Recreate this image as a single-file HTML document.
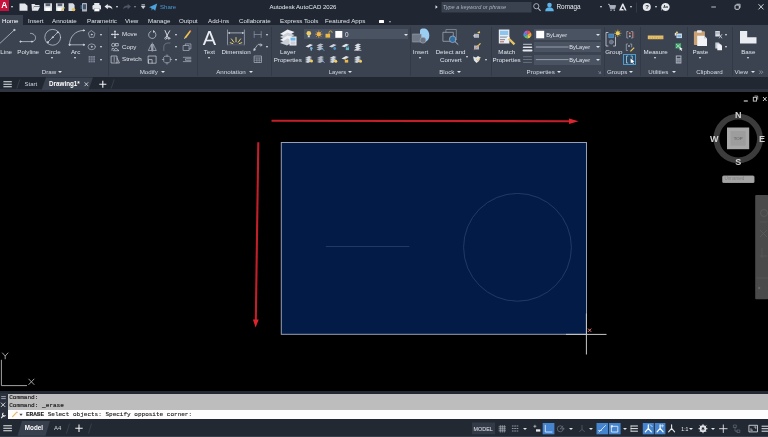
<!DOCTYPE html>
<html><head><meta charset="utf-8"><title>Autodesk AutoCAD 2026</title>
<style>
*{margin:0;padding:0;box-sizing:border-box}
html,body{width:768px;height:437px;overflow:hidden;background:#000}
body{position:relative;font-family:"Liberation Sans",sans-serif;color:#dfe3ea;font-size:6px}
.a{position:absolute}
.t{position:absolute;white-space:nowrap;line-height:8px;height:8px;font-size:6.2px;color:#dfe3ea;transform:translateX(-50%);text-align:center}
.l{position:absolute;white-space:nowrap;line-height:8px;height:8px;font-size:6.2px;color:#dfe3ea}
#title{left:0;top:0;width:768px;height:26px;background:#212732}
#ribbon{left:0;top:25.400px;width:768px;height:51.500px;background:#3b4351}
#hometab{left:0;top:15.400px;width:23px;height:11px;background:#3b4351}
#doctabs{left:0;top:77px;width:768px;height:12px;background:#222832}
#frame{left:0;top:89px;width:768px;height:3px;background:#2e3440}
#canvas{left:0;top:92px;width:768px;height:299px;background:#000}
.sep{position:absolute;top:27px;width:1px;height:49px;background:#333a47}
.dd{position:absolute;background:#4a5362;height:10px}
.arr{position:absolute;width:0;height:0;border-left:1.6px solid transparent;border-right:1.6px solid transparent;border-top:2px solid #dfe3ea}
.arr.b{border-left-width:2.2px;border-right-width:2.2px;border-top-width:2.6px;margin-left:-.3px}
.pt{position:absolute;white-space:nowrap;line-height:8px;height:8px;font-size:6.2px;color:#d5dae3;top:68px}
svg{position:absolute;overflow:visible}
#w{position:absolute;left:0;top:0;width:768px;height:437px;will-change:transform}
</style></head><body><div id="w">
<div class="a" id="title"></div>
<div class="a" id="hometab"></div>
<div class="a" id="ribbon"></div>
<div class="a" id="doctabs"></div>
<div class="a" id="frame"></div>
<div class="a" id="canvas"></div>
<!--TITLEBAR-->
<div class="a" style="left:0;top:0;width:9px;height:11px;background:#c8103c"></div>
<div class="l" style="left:1.2px;top:1.2px;font-size:8.5px;font-weight:bold;color:#fff;line-height:9px">A</div>
<div class="arr" style="left:10.6px;top:6px"></div>
<svg style="left:0;top:0" width="768" height="16" viewBox="0 0 768 16">
 <!-- new -->
 <path d="M19.5 3.5h5.5l2.5 2.2v5h-8z" fill="#e4e7ec"/>
 <!-- open -->
 <path d="M31.5 4h3l1 1h4v1.2h-5.5l-2 4.5z M32 10.7l2-4h6l-2 4z" fill="#e4e7ec"/>
 <!-- save -->
 <rect x="44" y="3.3" width="8" height="7.6" fill="#d8dce3"/><rect x="45.6" y="3.3" width="4.6" height="2.8" fill="#5a6270"/><rect x="45.4" y="7.6" width="5" height="3.3" fill="#fff"/>
 <!-- saveas -->
 <rect x="56" y="3.3" width="8" height="7.6" fill="#d8dce3"/><rect x="57.6" y="3.3" width="4.6" height="2.8" fill="#5a6270"/><rect x="57.4" y="7.6" width="4" height="3.3" fill="#fff"/><path d="M61 10.5l3-3.5 1 .8-3 3.4z" fill="#e6c35a"/>
 <!-- web -->
 <path d="M68.5 3.3h4.5l1.6 1.6v6h-6.1z" fill="#d8dce3"/><circle cx="73.6" cy="9.6" r="1.7" fill="#e6c35a"/>
 <!-- mobile -->
 <rect x="82" y="3" width="5" height="8.5" rx=".6" fill="#aeb5c1"/><rect x="83" y="4.3" width="3" height="5" fill="#4a5362"/><path d="M80.5 6h2.4M80.5 8h2.4" stroke="#4da3e0" stroke-width=".8"/>
 <!-- print -->
 <rect x="92.5" y="5" width="8.5" height="4.6" rx="1.2" fill="#e4e7ec"/><rect x="94.2" y="3" width="5.2" height="2.6" fill="#e4e7ec"/><rect x="94.2" y="8.2" width="5.2" height="3" fill="#fff" stroke="#8b93a0" stroke-width=".4"/>
 <!-- undo -->
 <path d="M104.5 6.6l3.3-2.6v1.6c3 0 4.6 1.6 4.6 4-.9-1.5-2.2-2-4.6-2v1.7z" fill="#e4e7ec"/>
 <!-- redo dim -->
 <path d="M131 6.6l-3.3-2.6v1.6c-3 0-4.6 1.6-4.6 4 .9-1.5 2.2-2 4.6-2v1.7z" fill="#4f5765"/>
 <!-- qat dropdown -->
 <path d="M141.5 4.6h3.4M141.3 6l1.9 2.6 1.9-2.6z" stroke="#cfd4dc" stroke-width=".7" fill="#cfd4dc"/>
 <!-- share -->
 <path d="M149 7.2l8.2-3.8-2 7.4-2.3-2-1.2 1.6-.3-2.5z" fill="#4aa3df"/>
 <!-- search tri -->
 <path d="M435.5 5.3l2.2 1.7-2.2 1.7z" fill="#e4e7ec"/>
 <rect x="441.500" y="2" width="90" height="10.500" fill="#3a4250"/>
 <!-- search icon -->
 <circle cx="536.3" cy="6.2" r="2.6" fill="none" stroke="#b4bbc7" stroke-width=".9"/><path d="M538.2 8.3l2.4 2.6" stroke="#b4bbc7" stroke-width="1.1"/>
 <!-- user -->
 <circle cx="549.5" cy="5" r="2.3" fill="#5db4ea"/><path d="M545.2 11.3c0-3 2-4 4.300-4s4.300 1 4.300 4z" fill="#5db4ea"/>
 <!-- cart -->
 <path d="M608 4.300h1.300l1.200 4.500h4.200l.9-3.300h-6" fill="#aab1bd" stroke="#aab1bd" stroke-width=".9"/><circle cx="611" cy="10.300" r=".8" fill="#aab1bd"/><circle cx="614.300" cy="10.300" r=".8" fill="#aab1bd"/>
 <!-- autodesk A -->
 <path d="M619 10.600l3.300-7h1l3.300 7h-1.700l-2.100-4.600-1.300 3.100h1.700l.6 1.500z" fill="#e4e7ec"/>
 <path d="M636.500 2.500v10" stroke="#3a4250" stroke-width=".7"/>
 <!-- help -->
 <circle cx="646.800" cy="7" r="4" fill="#e4e7ec"/>
 <!-- chat -->
 <path d="M665.700 3a4 4 0 1 1-3.500 6l-1 2 .3-2.500a4 4 0 0 1 4.200-5.500z" fill="#e4e7ec"/>
 <!-- window controls -->
 <path d="M711.300 7h4.600" stroke="#e4e7ec" stroke-width=".8"/>
 <rect x="735" y="5" width="4.300" height="4.300" rx="1" fill="none" stroke="#e4e7ec" stroke-width=".9"/><path d="M736.500 4.200h3.600v3.600" fill="none" stroke="#e4e7ec" stroke-width=".7"/>
 <path d="M758.500 4.200l5 5.200M763.500 4.200l-5 5.200" stroke="#e4e7ec" stroke-width=".9"/>
</svg>
<div class="arr" style="left:115.600px;top:6px"></div>
<div class="arr" style="left:134.400px;top:6px;border-top-color:#8a919e"></div>
<div class="l" style="left:160px;top:3px;font-size:6.100px;color:#4a98d0">Share</div>
<div class="l" style="left:269.500px;top:3px;font-size:6.050px;color:#e8ebf0" id="ttl">Autodesk AutoCAD 2026</div>
<div class="l" style="left:442.800px;top:3.200px;font-size:5.500px;font-style:italic;color:#aab1bd">Type a keyword or phrase</div>
<div class="l" style="left:556.500px;top:3px;font-size:6.400px;color:#e8ebf0">Romaga</div>
<div class="arr" style="left:599.800px;top:6px"></div>
<div class="arr" style="left:629.800px;top:6px"></div>
<div class="arr" style="left:654.800px;top:6px"></div>
<div class="l" style="left:645.300px;top:3.200px;font-size:6px;font-weight:bold;color:#212732">?</div>
<div class="l" style="left:663.300px;top:4px;font-size:3.600px;font-weight:bold;color:#212732;line-height:6px">Aa</div>
<!--TABS-->
<div class="l" style="left:2px;top:17.300px;color:#fff" id="tHome">Home</div>
<div class="l" style="left:28px;top:17.300px" id="tInsert">Insert</div>
<div class="l" style="left:52px;top:17.300px" id="tAnnotate">Annotate</div>
<div class="l" style="left:87px;top:17.300px" id="tParametric">Parametric</div>
<div class="l" style="left:125px;top:17.300px" id="tView">View</div>
<div class="l" style="left:148px;top:17.300px" id="tManage">Manage</div>
<div class="l" style="left:179px;top:17.300px" id="tOutput">Output</div>
<div class="l" style="left:208px;top:17.300px" id="tAddins">Add-ins</div>
<div class="l" style="left:239px;top:17.300px" id="tCollab">Collaborate</div>
<div class="l" style="left:280px;top:17.300px" id="tExpress">Express Tools</div>
<div class="l" style="left:325px;top:17.300px" id="tFeatured">Featured Apps</div>
<div class="a" style="left:379px;top:19.500px;width:5px;height:3px;background:#fff;border-radius:.5px"></div>
<div class="arr" style="left:389px;top:20.500px;border-top-color:#aab1bd"></div>
<!--RIBBON-->
<div class="sep" style="left:108px"></div>
<div class="sep" style="left:196.500px"></div>
<div class="sep" style="left:271px"></div>
<div class="sep" style="left:410px"></div>
<div class="sep" style="left:491px"></div>
<div class="sep" style="left:603.500px"></div>
<div class="sep" style="left:640px"></div>
<div class="sep" style="left:687px"></div>
<div class="sep" style="left:732px"></div>
<svg style="left:0;top:0" width="768" height="78" viewBox="0 0 768 78" fill="none" stroke="#cdd2db" stroke-width=".7" stroke-linecap="round" stroke-linejoin="round">
 <!-- Line -->
 <path d="M0 43.300L14.300 30"/><circle cx="14.300" cy="30" r=".7" fill="#cdd2db"/>
 <!-- Polyline -->
 <path d="M20.500 41.600H32.200C37 41 37 33.500 30.500 33.300"/><circle cx="20.500" cy="41.600" r=".7" fill="#cdd2db"/><circle cx="32" cy="41.600" r=".7" fill="#cdd2db"/>
 <!-- Circle -->
 <circle cx="52.700" cy="37.300" r="7.900"/><path d="M47.500 42.500L58 32"/><circle cx="52.700" cy="37.300" r=".6" fill="#cdd2db"/><circle cx="47.800" cy="42.200" r=".6" fill="#cdd2db"/><circle cx="57.700" cy="32.300" r=".6" fill="#cdd2db"/>
 <!-- Arc -->
 <path d="M69.500 44.800C69.500 37 75 30.400 83.800 30.400"/><path d="M69.500 44.800H83.800"/><circle cx="69.500" cy="44.800" r=".7" fill="#cdd2db"/><circle cx="83.800" cy="44.800" r=".7" fill="#cdd2db"/><circle cx="83.800" cy="30.400" r=".7" fill="#cdd2db"/>
 <!-- polygon -->
 <path d="M91.700 30.800l3.300 2.500-1.200 4h-4.200l-1.200-4z" stroke="#aeb5c1"/><circle cx="91.700" cy="34.500" r=".5" fill="#aeb5c1"/>
 <!-- ellipse -->
 <ellipse cx="91.700" cy="46.800" rx="3.700" ry="2.900" stroke="#aeb5c1"/><circle cx="91.700" cy="46.800" r=".5" fill="#aeb5c1"/>
 <!-- hatch -->
 <rect x="88.600" y="56" width="6.400" height="6.400" fill="#7b8494" stroke="none"/><path d="M90.700 56v6.400M92.900 56v6.400M88.600 58.100h6.400M88.600 60.300h6.400" stroke="#3b4351" stroke-width=".5"/>
 <!-- Move -->
 <path d="M112 34.400h6M115 31.400v6" stroke="#e4e7ec" stroke-width=".9"/><path d="M115 30.300l1.200 1.500h-2.400zM115 38.500l1.200-1.500h-2.400zM110.900 34.400l1.500-1.200v2.400zM119.100 34.400l-1.500-1.200v2.400z" fill="#e4e7ec" stroke="none"/>
 <!-- Copy -->
 <circle cx="113.300" cy="45" r="1.700"/><rect x="115.700" y="43.500" width="2.600" height="2.400"/><path d="M112 50.400v-1.800h1.800M116.200 48.300l2.800 2.400h-5.200z"/>
 <!-- Stretch -->
 <path d="M111.500 56h5.500v7h-5.500zM117 63h2.500l-2.500-5"/><path d="M114.200 57.200v4.300" stroke-width=".6"/>
 <!-- rotate -->
 <path d="M154.500 31.800a3.700 3.700 0 1 1-3.500-.5"/><path d="M153 30l2.200 1.500-2 1.500z" fill="#cdd2db" stroke="none"/>
 <!-- mirror -->
 <path d="M152.300 43v8.300M151.300 44.500l-3 6h3zM153.300 44.500l3 6h-3z" stroke-width=".6"/>
 <!-- scale -->
 <path d="M148.500 56h7.600v7.200h-7.600zM148.500 63.200v-3.600h3.600v3.600"/>
 <!-- trim -->
 <path d="M165 30.500l3.400 7.800M169.700 30.800l-3.700 6.500" stroke="#e4e7ec" stroke-width=".9"/><circle cx="165.700" cy="38.300" r="1" /><circle cx="168.900" cy="38.300" r="1"/>
 <!-- fillet -->
 <path d="M163.800 50.500v-3.500c0-2.500 1.700-4 4.500-4h1.700" stroke="#7b8494"/>
 <!-- array -->
 <path d="M165.200 56.200h3.600l1.500 1.500v3.600l-1.500 1.500h-3.600l-1.500-1.500v-3.600z" stroke="#aeb5c1"/><path d="M167 54.800v1.400M167 62.800v1.400M162.300 59.500h1.400M170.300 59.500h1.400" stroke="#aeb5c1"/>
 <!-- erase -->
 <path d="M184.500 38.300l1.700-.4 4.800-6.300-1.200-1-4.900 6.200z" fill="#f0c24b" stroke="none"/><path d="M184.200 38.700l1.200-.3-.9-.8z" fill="#fff" stroke="none"/><path d="M189.500 31l1.300 1 .6-.9-1.200-1z" fill="#e8775a" stroke="none"/>
 <!-- explode -->
 <path d="M183.500 45.500h5.600v5h-5.600zM185.300 45.500v-1.600h5.600v5h-1.800" stroke="#aeb5c1"/>
 <!-- offset -->
 <path d="M183.300 57.300h7.600M183.300 61.600h7.600" stroke="#aeb5c1"/><path d="M190.900 58.700h-5.400v1.600h5.400" stroke="#aeb5c1"/>
</svg>
<div class="t" style="left:6.200px;top:47.800px" id="lLine">Line</div>
<div class="t" style="left:28.200px;top:47.800px" id="lPoly">Polyline</div>
<div class="t" style="left:52.800px;top:47.800px" id="lCircle">Circle</div>
<div class="t" style="left:75.600px;top:47.800px" id="lArc">Arc</div>
<div class="arr" style="left:51.100px;top:57.200px"></div>
<div class="arr" style="left:74.400px;top:57.200px"></div>
<div class="arr" style="left:100.100px;top:33.800px"></div>
<div class="arr" style="left:100.100px;top:46.200px"></div>
<div class="arr" style="left:100.100px;top:58.600px"></div>
<div class="pt" style="left:41.800px" id="pDraw">Draw</div><div class="arr b" style="left:58.7px;top:71.2px"></div>
<div class="l" style="left:122px;top:30.300px" id="lMove">Move</div>
<div class="l" style="left:122px;top:43.100px" id="lCopy">Copy</div>
<div class="l" style="left:122px;top:55.300px" id="lStretch">Stretch</div>
<div class="arr" style="left:174.500px;top:33.800px"></div>
<div class="arr" style="left:174.500px;top:46.200px"></div>
<div class="arr" style="left:174.500px;top:58.600px"></div>
<div class="pt" style="left:139.700px" id="pModify">Modify</div><div class="arr b" style="left:161.7px;top:71.2px"></div>
<!--RIBBON2-->
<div class="l" style="left:202.800px;top:28px;font-size:20px;line-height:20px;height:20px;color:#e9ecf1" id="bigA">A</div>
<div class="dd" style="left:304px;top:29px;width:104px"></div>
<svg style="left:0;top:0" width="768" height="78" viewBox="0 0 768 78" fill="none" stroke="#cdd2db" stroke-width=".7" stroke-linecap="round" stroke-linejoin="round">
 <!-- Dimension -->
 <path d="M227.500 30v14.800M244.400 30v14.800" stroke="#aeb5c1"/><path d="M228.500 32.900h15"/><path d="M228 32.900l2-1v2zM244 32.900l-2-1v2z" fill="#cdd2db" stroke="none"/>
 <path d="M236 41.800v-4.300M233.800 42.200l-2.400-3.300M238.200 42.200l2.400-3.300M232.800 43.600l-2.600-.9M239.200 43.600l2.600-.9" stroke="#f0d97a" stroke-width=".9"/>
 <path d="M227.500 44.800h17" stroke="#5d6573"/>
 <!-- linear dim -->
 <path d="M254.200 31.500v6M261.200 31.500v6M254.200 34.500h7" stroke="#8e97a6"/>
 <!-- leader -->
 <path d="M254.300 49.500l3-4.200c1-1.300 2-1.400 3-.6" stroke="#cdd2db"/><circle cx="260.800" cy="45" r="1" stroke="#cdd2db"/><path d="M253.800 50.300l.3-1.800 1.200 1z" fill="#cdd2db"/>
 <!-- table -->
 <rect x="254.500" y="56" width="7" height="6.500" stroke="#aeb5c1"/><path d="M254.500 58h7M254.500 60.200h7M256.900 58v4.500M259.200 58v4.500" stroke="#aeb5c1" stroke-width=".5"/>
 <!-- Layer Properties -->
 <g stroke="none">
 <path d="M280 34l7.500-4.500 7 2.500-7.500 4.500z" fill="#eef0f4"/>
 <path d="M280 37l7.500-4.500 7 2.500-7.500 4.500z" fill="#c9ced7"/>
 <path d="M280 40l7.500-4.500 7 2.500-7.500 4.500z" fill="#eef0f4"/>
 <path d="M280 43l7.500-4.500 7 2.500-7.500 4.500z" fill="#c9ced7"/>
 <rect x="289.500" y="36.500" width="7" height="9" fill="#f4f6f9"/><rect x="290.500" y="37.600" width="5" height="3" fill="#6fb6e6"/><rect x="290.500" y="41.600" width="5" height="1" fill="#aeb5c1"/><rect x="290.500" y="43.400" width="5" height="1" fill="#aeb5c1"/>
 </g>
 <!-- layer dropdown contents -->
 <g stroke="none">
 <circle cx="308.800" cy="33.300" r="2.300" fill="#f3cf5b"/><rect x="307.800" y="35.300" width="2" height="2" fill="#d9dde4"/>
 <circle cx="318.800" cy="34.200" r="2.100" fill="#f3b64a"/><path d="M318.800 30.800v6.800M315.400 34.200h6.800M316.400 31.800l4.800 4.800M321.200 31.800l-4.800 4.800" stroke="#f3b64a" stroke-width=".6"/>
 <rect x="325.500" y="33.800" width="4.600" height="3.800" fill="#e9b949"/><path d="M329 33.800v-1.300a1.600 1.600 0 0 1 3.200 0" stroke="#e9b949" stroke-width=".8" fill="none"/>
 <rect x="335.300" y="31" width="7" height="6.800" fill="#fff"/>
 </g>
 <!-- layer small icons row1 -->
 <g stroke="none" id="lyr1">
 <path d="M305.500 46.500l4.500-2.500 3 1-4.500 2.500z" fill="#e2e6ec"/><circle cx="311.300" cy="48.300" r="1.300" fill="#67b7e8"/><rect x="310.700" y="49.300" width="1.200" height="1.200" fill="#cfd4dc"/>
 <path d="M316.500 45.500l4-2 3 1-4 2zM316.500 47.500l4-2 3 1-4 2zM316.500 49.500l4-2 3 1-4 2z" fill="#b4bbc7"/><path d="M321.500 48l2.500 2.500" stroke="#67b7e8" stroke-width=".9"/>
 <path d="M329 46.500l4.500-2.500 3 1-4.500 2.500z" fill="#cfd4dc"/><circle cx="334.700" cy="48.500" r="1.400" fill="#4b93c4"/>
 <path d="M341.500 46.300l4.500-2.500 3 1-4.500 2.500z" fill="#e2e6ec"/><rect x="345.800" y="47.500" width="3.200" height="2.600" fill="#62b9c9"/><path d="M346.500 47.500v-.8a.9.900 0 0 1 1.800 0v.8" stroke="#62b9c9" stroke-width=".6" fill="none"/>
 <path d="M354.500 45.500l3.500-2 3 1-3.500 2zM354.500 47.500l3.500-2 3 1-3.500 2zM354.500 49.500l3.500-2 3 1-3.500 2z" fill="#d9dde4"/><path d="M354.500 50.300h6.500" stroke="#e2e6ec" stroke-width=".7"/>
 </g>
 <!-- row2 -->
 <g stroke="none" id="lyr2">
 <path d="M305 58l4-2 3 1-4 2zM305 60l4-2 3 1-4 2zM305 62l4-2 3 1-4 2z" fill="#cfd4dc"/><circle cx="311.500" cy="61" r="1.500" fill="#f3cf5b"/>
 <path d="M317 58l4-2 3 1-4 2zM317 60l4-2 3 1-4 2zM317 62l4-2 3 1-4 2z" fill="#aeb5c1"/><path d="M322 60.300l2.200 2.200" stroke="#8fb5d6" stroke-width=".9"/>
 <path d="M329.500 58l4-2 3 1-4 2zM329.500 60l4-2 3 1-4 2zM329.500 62l4-2 3 1-4 2z" fill="#cfd4dc"/><circle cx="335.800" cy="61.300" r="1.500" fill="#f3cf5b"/>
 <path d="M341.500 58.500l4.500-2.500 3 1-4.500 2.500z" fill="#e2e6ec"/><rect x="344.800" y="60" width="3.400" height="2.600" fill="#e9b949"/><path d="M345.500 60v-.8a.9.900 0 0 1 1.800 0" stroke="#e9b949" stroke-width=".6" fill="none"/>
 <path d="M354 58l4-2 3 1-4 2zM354 60l4-2 3 1-4 2zM354 62l4-2 3 1-4 2z" fill="#cfd4dc"/><circle cx="360.500" cy="61.300" r="1.500" fill="#f3cf5b"/>
 </g>
</svg>
<div class="t" style="left:209.400px;top:47.800px" id="lText">Text</div>
<div class="arr" style="left:207.800px;top:57.200px"></div>
<div class="t" style="left:236px;top:47.800px" id="lDim">Dimension</div>
<div class="arr" style="left:265.500px;top:33.800px"></div>
<div class="arr" style="left:265.500px;top:46.200px"></div>
<div class="pt" style="left:216.200px" id="pAnno">Annotation</div><div class="arr b" style="left:249.4px;top:71.2px"></div>
<div class="t" style="left:287.800px;top:47.800px" id="lLayer">Layer</div>
<div class="t" style="left:287.800px;top:56px" id="lProps">Properties</div>
<div class="l" style="left:345px;top:31px;font-size:6.400px">0</div>
<div class="arr b" style="left:404px;top:33.500px"></div>
<div class="pt" style="left:328.800px;font-size:5.800px" id="pLayers">Layers</div><div class="arr b" style="left:348.7px;top:71.2px"></div>
<!--RIBBON3-->
<div class="dd" style="left:533.600px;top:29px;width:67.800px;height:10.500px"></div>
<div class="dd" style="left:533.600px;top:41.800px;width:67.800px"></div>
<div class="dd" style="left:533.600px;top:54.500px;width:67.800px"></div>
<div class="a" style="left:623.300px;top:53.600px;width:13.200px;height:11.400px;background:#2c4a63;border:.7px solid #4f9ccc"></div>
<svg style="left:0;top:0" width="768" height="78" viewBox="0 0 768 78" fill="none" stroke="#cdd2db" stroke-width=".7" stroke-linecap="round" stroke-linejoin="round">
 <!-- Insert -->
 <g stroke="none">
 <path d="M420 42V31c0-1.500 1-2.500 2.500-2.500h2.500c3 1 4.300 4 4.300 7s-1.300 5.500-4.300 6.500z" fill="#9acff3"/>
 <rect x="412.800" y="34" width="8.600" height="8" fill="#6f7887"/><path d="M412.800 34h8.600v8h-8.600z" fill="none" stroke="#aeb5c1" stroke-width=".5"/>
 <circle cx="423" cy="40.200" r="3" fill="#6d7685" stroke="#aeb5c1" stroke-width=".5"/>
 </g>
 <!-- Detect and convert -->
 <rect x="446.300" y="29.500" width="10" height="9" stroke="#8e97a6"/><rect x="443.300" y="32.300" width="10" height="9" stroke="#aeb5c1" fill="#3b4351"/>
 <circle cx="452.700" cy="39.300" r="3.300" stroke="#aeb5c1" fill="#2f6fa3"/><path d="M455.200 41.800l2.800 2.600" stroke="#aeb5c1" stroke-width="1"/>
 <!-- block small icons -->
 <g stroke="none">
 <rect x="474" y="33.800" width="5" height="4" fill="#aeb5c1"/><path d="M477 33l2.500-2 .8 2.200z" fill="#f3cf5b"/><rect x="473.500" y="35" width="1" height="1.600" fill="#e4e7ec"/>
 <rect x="474" y="45.500" width="5" height="4" fill="#aeb5c1"/><path d="M476.500 46.500l3.600-3.500.8.800-3.600 3.500z" fill="#f3cf5b"/><path d="M474 49.500l5-4" stroke="#e8775a" stroke-width=".6"/>
 <path d="M473 56.500l3 1 2-1.500 2.500 1.500-1.500 3.500-2.500 2-2.500-2.500z" fill="#dfe3ea"/><path d="M476.500 59.500l1.300 1.300 2.300-3" stroke="#e9b949" stroke-width=".8" fill="none"/>
 </g>
 <!-- Match properties -->
 <g stroke="none">
 <rect x="498.800" y="29.500" width="10.600" height="14" fill="#e9ecf1"/><rect x="500" y="30.800" width="8.200" height="4.200" fill="#8cc6ee"/><rect x="500" y="36.500" width="8.200" height="1.200" fill="#8e97a6"/><rect x="500" y="39" width="5" height="1.200" fill="#8e97a6"/><rect x="500" y="41.300" width="4" height="1" fill="#c0604c"/>
 <path d="M507.500 39l1.600-1.600 6.200 6-1.600 1.800z" fill="#e9c466"/><path d="M506.300 38l2-2 1.500 1.500-2 2z" fill="#f4f6f9"/>
 </g>
 <!-- color wheel -->
 <g stroke="none">
 <path d="M527.400 34.500L527.400 30.500A4 4 0 0 1 530.860 32.500z" fill="#e8544d"/>
 <path d="M527.400 34.500L530.860 32.500A4 4 0 0 1 530.860 36.500z" fill="#f0a03c"/>
 <path d="M527.400 34.500L530.860 36.500A4 4 0 0 1 527.400 38.500z" fill="#e9d24a"/>
 <path d="M527.400 34.500L527.400 38.500A4 4 0 0 1 523.940 36.500z" fill="#5cba6a"/>
 <path d="M527.400 34.500L523.940 36.500A4 4 0 0 1 523.940 32.500z" fill="#4a8fe0"/>
 <path d="M527.400 34.500L523.940 32.500A4 4 0 0 1 527.400 30.500z" fill="#b45ad0"/>
 </g>
 <!-- lineweight -->
 <path d="M523.500 44.300h8" stroke="#e4e7ec" stroke-width=".8"/><path d="M523.500 47.200h8" stroke="#e4e7ec" stroke-width="1.500"/><path d="M523.500 50.500h8" stroke="#e4e7ec" stroke-width="2"/>
 <!-- linetype -->
 <path d="M523.500 56.700h8M523.500 62.400h8" stroke="#7b8494" stroke-width=".7"/><path d="M523.500 59.500h2M526.500 59.500h2M529.500 59.500h2" stroke="#7b8494" stroke-width=".8"/>
 <!-- dropdown contents -->
 <rect x="536.200" y="30.800" width="8" height="7.500" fill="#fff" stroke="none"/>
 <path d="M536.200 47h32M536.200 59.600h32" stroke="#cdd2db" stroke-width=".6"/>
 <!-- panel launcher arrow -->
 <path d="M598.500 71.300l2 2M600.500 71.800v1.500h-1.500" stroke="#8e97a6" stroke-width=".6"/>
 <!-- Group -->
 <path d="M608 32.500h-2v13.500h2M615.500 37v9h-2" stroke="#cdd2db" stroke-width=".8"/>
 <rect x="609" y="34" width="4.600" height="3.600" fill="#3f7fb3" stroke="#6fb6e6" stroke-width=".5"/><circle cx="611.300" cy="42" r="2.100" fill="#6d7685" stroke="#8e97a6" stroke-width=".5"/>
 <circle cx="617.800" cy="33.300" r="2" fill="#f3cf5b" stroke="none"/><path d="M617.800 30v6.600M614.500 33.300h6.600M615.500 31l4.600 4.600M620.100 31l-4.600 4.600" stroke="#f3cf5b" stroke-width=".5"/>
 <!-- group small -->
 <path d="M628 31.500h-1.200v6.500h1.200M631.500 31.500h1.200v6.500h-1.200" stroke="#aeb5c1"/><circle cx="629.800" cy="33.300" r="1" fill="#e8775a" stroke="none"/><circle cx="629.800" cy="36.300" r="1" fill="#aeb5c1" stroke="none"/><path d="M633.700 32v5.500" stroke="#c0504a"/>
 <path d="M627.500 44h-1.200v6.500h1.200M630.500 44h1.200v3" stroke="#aeb5c1"/><circle cx="629" cy="46" r=".9" fill="#aeb5c1" stroke="none"/><path d="M630 51l3.800-3.800.8.800-3.800 3.800z" fill="#f3cf5b" stroke="none"/>
 <path d="M627.800 56h-1.300v7h1.300M631 56h1.300v3" stroke="#bfe0f3"/><path d="M630.500 58.500l.3 5 1.300-1.200 1 1.800.8-.5-1-1.700 1.600-.4z" fill="#fff" stroke="none"/>
 <!-- Measure -->
 <rect x="647.800" y="35.500" width="15.600" height="3.700" fill="#e6c068" stroke="none"/><path d="M650 37.500v1.700M652.500 37.500v1.700M655 37v2.200M657.500 37.500v1.700M660 37.500v1.700M662 37.500v1.700" stroke="#a5873f" stroke-width=".4"/>
 <!-- utilities small -->
 <g stroke="none">
 <rect x="676.500" y="33.500" width="5.400" height="4.600" fill="#dfe3ea"/><rect x="677.300" y="34.800" width="3.800" height="2.500" fill="#6fb6e6"/><path d="M675 33.500l2-2.500 1.200 2z" fill="#f3cf5b"/><rect x="674.800" y="33" width="1.600" height="2.600" fill="#e4e7ec"/>
 <rect x="675.500" y="43.300" width="5.600" height="5.200" fill="#3fa66c"/><path d="M676.300 44.300l3.800 3.400M680.100 44.300l-3.800 3.400" stroke="#d8f0e0" stroke-width=".6"/><path d="M679.500 47l.3 3.600 1-1 .8 1.400.6-.4-.8-1.300 1.300-.3z" fill="#fff"/>
 <rect x="675.800" y="55.500" width="5.600" height="8" fill="#aeb5c1"/><rect x="676.700" y="56.500" width="3.800" height="1.800" fill="#3b4351"/><path d="M676.700 60h3.800M676.700 61.800h3.800" stroke="#3b4351" stroke-width=".6" stroke-dasharray="1 .4"/>
 </g>
 <!-- Paste -->
 <g stroke="none">
 <rect x="693.900" y="31.300" width="11" height="13.700" rx=".8" fill="#c9a173"/><rect x="697" y="30.300" width="4.800" height="2.400" rx=".6" fill="#e9ecf1"/>
 <path d="M697.200 35.800h6.800l3 2.800v7.400h-9.800z" fill="#f1f3f6"/><path d="M704 35.800v2.800h3z" fill="#c9ced7"/>
 </g>
 <!-- clipboard small -->
 <g stroke="none">
 <rect x="715.300" y="31" width="4.500" height="5.500" fill="#dfe3ea"/><path d="M716 32.300h3M716 33.800h3" stroke="#6d7685" stroke-width=".5"/><path d="M719.300 34.500l2.500 3.500M721.800 34.500l-2.500 3.500" stroke="#dfe3ea" stroke-width=".7"/>
 <path d="M715.300 42.500h3.500l1.200 1.200v4.800h-4.700z" fill="#c9ced7"/><path d="M717.300 44.300h3.500l1.200 1.200v4.800h-4.700z" fill="#f1f3f6"/>
 </g>
 <!-- Base -->
 <path d="M740 31.100h7.200v6.100h9.300v6.300h-16.500z" fill="#e9ecf1" stroke="none"/>
 <!-- >> -->
 <path d="M759.500 70.800l1.400 1.400-1.400 1.400M761.500 70.800l1.400 1.400-1.400 1.400" stroke="#aeb5c1" stroke-width=".6"/>
</svg>
<div class="t" style="left:420.600px;top:47.800px" id="lInsert">Insert</div>
<div class="arr" style="left:419px;top:56.500px"></div>
<div class="t" style="left:450.600px;top:47.800px" id="lDetect">Detect and</div>
<div class="t" style="left:450.800px;top:56.200px" id="lConvert">Convert</div>
<div class="arr" style="left:466.200px;top:55.800px"></div>
<div class="arr" style="left:484.600px;top:58.600px"></div>
<div class="pt" style="left:439.200px" id="pBlock">Block</div><div class="arr b" style="left:457.1px;top:71.2px"></div>
<div class="t" style="left:506.800px;top:47.800px" id="lMatch">Match</div>
<div class="t" style="left:506.600px;top:56.200px" id="lMProps">Properties</div>
<div class="l" style="left:546.200px;top:30.700px;font-size:5.700px" id="by1">ByLayer</div>
<div class="l" style="left:569.300px;top:43.200px;font-size:5.700px">ByLayer</div>
<div class="l" style="left:569.300px;top:55.800px;font-size:5.700px">ByLayer</div>
<div class="arr b" style="left:596.700px;top:33.500px"></div>
<div class="arr b" style="left:596.700px;top:46.200px"></div>
<div class="arr b" style="left:596.700px;top:58.800px"></div>
<div class="pt" style="left:526.600px" id="pProps">Properties</div><div class="arr b" style="left:556.8px;top:71.2px"></div>
<div class="t" style="left:613.800px;top:47.600px" id="lGroup">Group</div>
<div class="pt" style="left:607px" id="pGroups">Groups</div><div class="arr b" style="left:629.6px;top:71.2px"></div>
<div class="t" style="left:655.600px;top:47.800px" id="lMeasure">Measure</div>
<div class="arr" style="left:654px;top:57.200px"></div>
<div class="pt" style="left:648.300px" id="pUtil">Utilities</div><div class="arr b" style="left:672.0px;top:71.2px"></div>
<div class="t" style="left:700.300px;top:47.800px" id="lPaste">Paste</div>
<div class="arr" style="left:698.700px;top:57.200px"></div>
<div class="arr" style="left:725.300px;top:33.800px"></div>
<div class="arr" style="left:725.300px;top:46px"></div>
<div class="pt" style="left:696.200px" id="pClip">Clipboard</div>
<div class="t" style="left:748.300px;top:47.800px" id="lBase">Base</div>
<div class="arr" style="left:746.700px;top:57.200px"></div>
<div class="pt" style="left:734.600px" id="pView">View</div><div class="arr b" style="left:751.5px;top:71.2px"></div>
<!--DOCTABS-->
<svg style="left:0;top:77px" width="768" height="13" viewBox="0 77 768 13">
 <path d="M41.500 90l4.500-12.500h47l-4.500 12.500z" fill="#3a414e"/>
 <path d="M3.400 81.800h8.400M3.400 84.300h8.400M3.400 86.800h8.400" stroke="#e4e7ec" stroke-width="1.100"/>
 <path d="M16.800 88.500l3-9M111.200 88.500l3-9" stroke="#3d4451" stroke-width=".8"/>
 <path d="M84.600 82.300l3.600 3.800M88.200 82.300l-3.600 3.800" stroke="#dfe3ea" stroke-width=".8"/>
 <path d="M99.300 84.200h7M102.800 80.700v7" stroke="#f1f3f6" stroke-width="1.100"/>
</svg>
<div class="l" style="left:24.500px;top:80.300px;font-size:6px;color:#cfd4dc" id="dStart">Start</div>
<div class="l" style="left:49px;top:80.200px;font-size:6.300px;font-weight:bold;color:#fff" id="dDraw">Drawing1*</div>
<!--CANVAS-->
<svg style="left:0;top:92px" width="768" height="299" viewBox="0 92 768 299">
 <rect x="281.300" y="142.500" width="305.200" height="191.800" fill="#031b47" stroke="#98a1b3" stroke-width="1"/>
 <circle cx="517.500" cy="247.300" r="53.900" fill="none" stroke="#27436f" stroke-width=".8"/>
 <path d="M325.800 246.500h83.500" stroke="#27436f" stroke-width=".8"/>
 <!-- arrows -->
 <path d="M271.500 120.800L571 121.200" stroke="#c21f28" stroke-width="2.100"/>
 <path d="M569 118.500l9.500 2.800-9.500 2.800z" fill="#e0242e"/>
 <path d="M258.300 142.300L255.800 321" stroke="#c21f28" stroke-width="2.100"/>
 <path d="M252.900 319.500l5.800.1-3.100 7.800z" fill="#e0242e"/>
 <!-- crosshair -->
 <path d="M566 334.400h40.500M586.400 313.500v41" stroke="#c9c9c9" stroke-width="1"/>
 <path d="M588 328.600l3.200 3.200M591.200 328.600l-3.200 3.200" stroke="#f08080" stroke-width="1"/>
 <!-- UCS -->
 <path d="M1.400 359.800V385.600H27" fill="none" stroke="#b4b4b4" stroke-width=".9"/>
 <path d="M2.200 352.700l3 3.300 3-3.300M5.200 356v3.200" fill="none" stroke="#b4b4b4" stroke-width=".9"/>
 <path d="M28.500 378.800l5.800 6M34.300 378.800l-5.800 6" stroke="#b4b4b4" stroke-width=".9"/>
 <!-- window ctrls -->
 <path d="M743.800 101h4" stroke="#d0d0d0" stroke-width="1.200"/>
 <rect x="753.300" y="97.300" width="3.200" height="3.800" fill="none" stroke="#d0d0d0" stroke-width=".9"/><path d="M754.500 96h3.200v3.600" fill="none" stroke="#d0d0d0" stroke-width=".7"/>
 <path d="M763 97l3.600 4M766.600 97l-3.600 4" stroke="#d0d0d0" stroke-width="1"/>
 <!-- viewcube -->
 <circle cx="738.200" cy="138.500" r="21.800" fill="none" stroke="#3c3c3c" stroke-width="5.800"/>
 <rect x="727" y="127.500" width="22.200" height="21.700" fill="#a8a8a8"/>
 <rect x="730.500" y="131" width="15.200" height="14.700" fill="#9d9d9d"/>
 <rect x="722.200" y="175.500" width="32.300" height="7.500" rx="1.500" fill="#8f8f8f"/>
 <rect x="722.800" y="176.100" width="31.100" height="6.300" rx="1.200" fill="#a4a4a4"/>
 <!-- navbar -->
 <rect x="755.200" y="195" width="13" height="104.300" rx="1" fill="#4a4a4a"/>
 <path d="M756 278h12" stroke="#5a5a5a" stroke-width=".6"/>
 <circle cx="764" cy="213" r="3.500" fill="none" stroke="#5c5c5c" stroke-width=".8"/>
 <path d="M760 230l7 7M767 230l-7 7" stroke="#5c5c5c" stroke-width=".8"/>
 <path d="M759.500 222h8M759.500 256h8M762 248v10" stroke="#5a5a5a" stroke-width=".7"/>
 <path d="M758.500 286.500l2.200 1.500-2.200 1.500z" fill="#707070"/>
</svg>
<div class="t" style="left:738.200px;top:110.900px;font-size:9px;line-height:9px;height:9px;font-weight:bold;color:#d4d4d4">N</div>
<div class="t" style="left:738.200px;top:158.300px;font-size:9px;line-height:9px;height:9px;font-weight:bold;color:#d4d4d4">S</div>
<div class="t" style="left:714.200px;top:134.600px;font-size:9px;line-height:9px;height:9px;font-weight:bold;color:#d4d4d4">W</div>
<div class="t" style="left:762px;top:134.600px;font-size:9px;line-height:9px;height:9px;font-weight:bold;color:#d4d4d4">E</div>
<div class="t" style="left:738.200px;top:135.500px;font-size:4.300px;line-height:6px;height:6px;color:#555">TOP</div>
<div class="l" style="left:724.500px;top:176.200px;font-size:4.600px;line-height:6px;height:6px;color:#808080">Unnamed</div>
<!--BOTTOM-->
<div class="a" style="left:0;top:391px;width:768px;height:46px;background:#232933"></div>
<div class="a" style="left:8px;top:393.800px;width:760px;height:16.200px;background:#bdbdbd"></div>
<div class="a" style="left:8px;top:410px;width:760px;height:9.300px;background:#fdfdfd"></div>
<div class="a" style="left:0;top:393px;width:8px;height:26.300px;background:#2b313c"></div>
<div class="a" style="left:0;top:435.800px;width:768px;height:1.200px;background:#3a414e"></div>
<svg style="left:0;top:391px" width="768" height="46" viewBox="0 391 768 46">
 <path d="M1.200 396.600h4.600M1.200 398.600h4.600" stroke="#b8bec8" stroke-width=".8"/>
 <path d="M1 402.700l4.200 4.200M5.200 402.700l-4.200 4.200" stroke="#e4e7ec" stroke-width=".9"/>
 <path d="M1.200 418l2.800-2.800M3.500 413a1.600 1.600 0 1 0 2 2.200" stroke="#e4e7ec" stroke-width="1.100" fill="none"/>
 <!-- cmd icon -->
 <path d="M12 417.300l1-.3 4-4.200-.8-.7-4 4.200z" fill="#e6b94e"/><path d="M16.300 412.200l.8.700.6-.7-.8-.7z" fill="#e8775a"/>
 <path d="M19.400 413.800h3.200l-1.600 2.200z" fill="#444"/>
 <!-- layout tabs -->
 <path d="M17.500 435.800l4.500-14.800h28l-4.500 14.800z" fill="#39404d"/>
 <path d="M3.300 425.800h8.600M3.300 428.300h8.600M3.300 430.800h8.600" stroke="#e4e7ec" stroke-width="1.100"/>
 <path d="M66.500 433.500l3-10M88.500 433.500l3-10" stroke="#3d4451" stroke-width=".8"/>
 <path d="M75.300 428.200h7.400M79 424.500v7.400" stroke="#f1f3f6" stroke-width="1.100"/>
</svg>
<div class="l" style="left:9.200px;top:394.300px;font-family:'Liberation Mono',monospace;font-size:6.080px;color:#1c1c1c;-webkit-text-stroke:.15px #1c1c1c" id="c1">Command:</div>
<div class="l" style="left:9.200px;top:401.800px;font-family:'Liberation Mono',monospace;font-size:6.080px;color:#1c1c1c;-webkit-text-stroke:.15px #1c1c1c" id="c2">Command: _erase</div>
<div class="l" style="left:26px;top:411.100px;font-family:'Liberation Mono',monospace;font-size:6.030px;color:#1c1c1c;-webkit-text-stroke:.12px #1c1c1c" id="c3"><b>ERASE</b> Select objects: Specify opposite corner:</div>
<div class="l" style="left:24.800px;top:424.200px;font-size:6.300px;font-weight:bold;color:#fff" id="bModel">Model</div>
<div class="l" style="left:54px;top:424.200px;font-size:6px;color:#cfd4dc" id="bA4">A4</div>
<!--STATUS-->
<svg style="left:0;top:420px" width="768" height="17" viewBox="0 420 768 17" fill="none" stroke-linecap="round" stroke-linejoin="round">
 <rect x="472" y="422.500" width="23" height="11.800" fill="#333a47"/>
 <!-- grid -->
 <path d="M500.300 425.500v6.600M502.300 425.500v6.600M504.300 425.500v6.600M499 426.800h6.600M499 428.800h6.600M499 430.800h6.600" stroke="#bfc5cf" stroke-width=".6"/>
 <!-- snap -->
 <path d="M512.300 426h5.600M512.300 428.500h5.600M512.300 431h5.600" stroke="#9ca4b1" stroke-width=".9" stroke-dasharray=".9 1.450"/>
 <!-- dyn input -->
 <path d="M533.800 426.300h2.200M534.900 425.200v2.200" stroke="#e4e7ec" stroke-width=".6"/><rect x="536" y="429.300" width="4.300" height="2.300" fill="#e4e7ec"/>
 <!-- ortho -->
 <rect x="542.700" y="423" width="11.700" height="11.300" fill="#4585d0"/><path d="M545.300 425.300v6.700h6.700" stroke="#eaf2fb" stroke-width=".8"/>
 <!-- polar -->
 <circle cx="560.300" cy="428.800" r="3" stroke="#717a89" stroke-width=".7"/><path d="M560.300 428.800h4M560.300 428.800l2.500-2.800" stroke="#717a89" stroke-width=".6"/>
 <!-- iso -->
 <path d="M582 425.500v4l2.500 2M582 429.500l-2.500 2" stroke="#5d6573" stroke-width=".7"/>
 <!-- osnap track -->
 <rect x="596.500" y="423" width="11.600" height="11.300" fill="#4585d0"/><path d="M599 432l6.500-6.500" stroke="#eaf2fb" stroke-width=".8"/><path d="M598.500 430.500h3" stroke="#eaf2fb" stroke-width=".6"/>
 <!-- osnap -->
 <rect x="609" y="423" width="11.600" height="11.300" fill="#4585d0"/><rect x="611.800" y="426.300" width="6" height="5.700" stroke="#eaf2fb" stroke-width=".8"/><rect x="610.800" y="425.300" width="2" height="2" fill="#eaf2fb"/>
 <!-- lineweight -->
 <path d="M631 426h6.500M631 428.600h6.500M631 431.200h6.500" stroke="#e4e7ec" stroke-width="1"/><path d="M631 426v5.200" stroke="#e4e7ec" stroke-width=".6"/>
 <!-- anno -->
 <rect x="642.800" y="423" width="11" height="11.300" fill="#4585d0"/><path d="M648.300 424.800v3.500l-3 3.500M648.300 428.300l3 3.500" stroke="#fff" stroke-width="1.200"/><path d="M650.300 424.800l1.800 1.800" stroke="#fff" stroke-width=".7"/>
 <rect x="654.800" y="423" width="10.600" height="11.300" fill="#4585d0"/><path d="M660.100 424.800v3.500l-3 3.500M660.100 428.300l3 3.500" stroke="#fff" stroke-width="1.200"/><path d="M662.300 424.600v2.500M661 425.800h2.600" stroke="#fff" stroke-width=".6"/>
 <path d="M671.600 424.800v3.500l-3 3.500M671.600 428.300l3 3.500" stroke="#e4e7ec" stroke-width="1.100"/>
 <!-- gear -->
 <circle cx="703" cy="428.700" r="2.600" stroke="#e4e7ec" stroke-width="1.500"/><path d="M703 424.600v8.200M698.900 428.700h8.200M700.100 425.800l5.800 5.800M705.900 425.800l-5.800 5.800" stroke="#e4e7ec" stroke-width="1"/><circle cx="703" cy="428.700" r="1.100" fill="#232933"/>
 <!-- plus -->
 <path d="M719.500 428.700h7.600M723.300 424.900v7.600" stroke="#e4e7ec" stroke-width=".9"/>
 <!-- units -->
 <rect x="733.800" y="425" width="2.500" height="2.500" stroke="#6d7685" stroke-width=".6"/><rect x="737.300" y="430" width="2.500" height="2.500" stroke="#6d7685" stroke-width=".6"/><path d="M735 427.500v3.700h2.300" stroke="#6d7685" stroke-width=".6"/>
 <!-- clean screen -->
 <rect x="749.300" y="425.300" width="8.200" height="6.600" stroke="#e4e7ec" stroke-width=".8"/><path d="M755.800 427v1.600M755.800 427h-1.600M751 430.200v-1.600M751 430.200h1.600" stroke="#e4e7ec" stroke-width=".6"/>
 <!-- customization -->
 <path d="M762 426.200h6M762 428.700h6M762 431.200h6" stroke="#e4e7ec" stroke-width="1"/>
</svg>
<div class="l" style="left:473.600px;top:424.600px;font-size:5.400px;color:#e4e7ec" id="sModel">MODEL</div>
<div class="l" style="left:681.300px;top:424.600px;font-size:5.200px;color:#e4e7ec" id="s11">1:1</div>
<div class="arr b" style="left:523.1px;top:427.8px"></div>
<div class="arr b" style="left:569.5px;top:427.8px"></div>
<div class="arr b" style="left:589.1px;top:427.8px"></div>
<div class="arr b" style="left:622.9px;top:427.8px"></div>
<div class="arr b" style="left:689.4px;top:427.8px"></div>
<div class="arr b" style="left:710.9px;top:427.8px"></div>
</div></body></html>
